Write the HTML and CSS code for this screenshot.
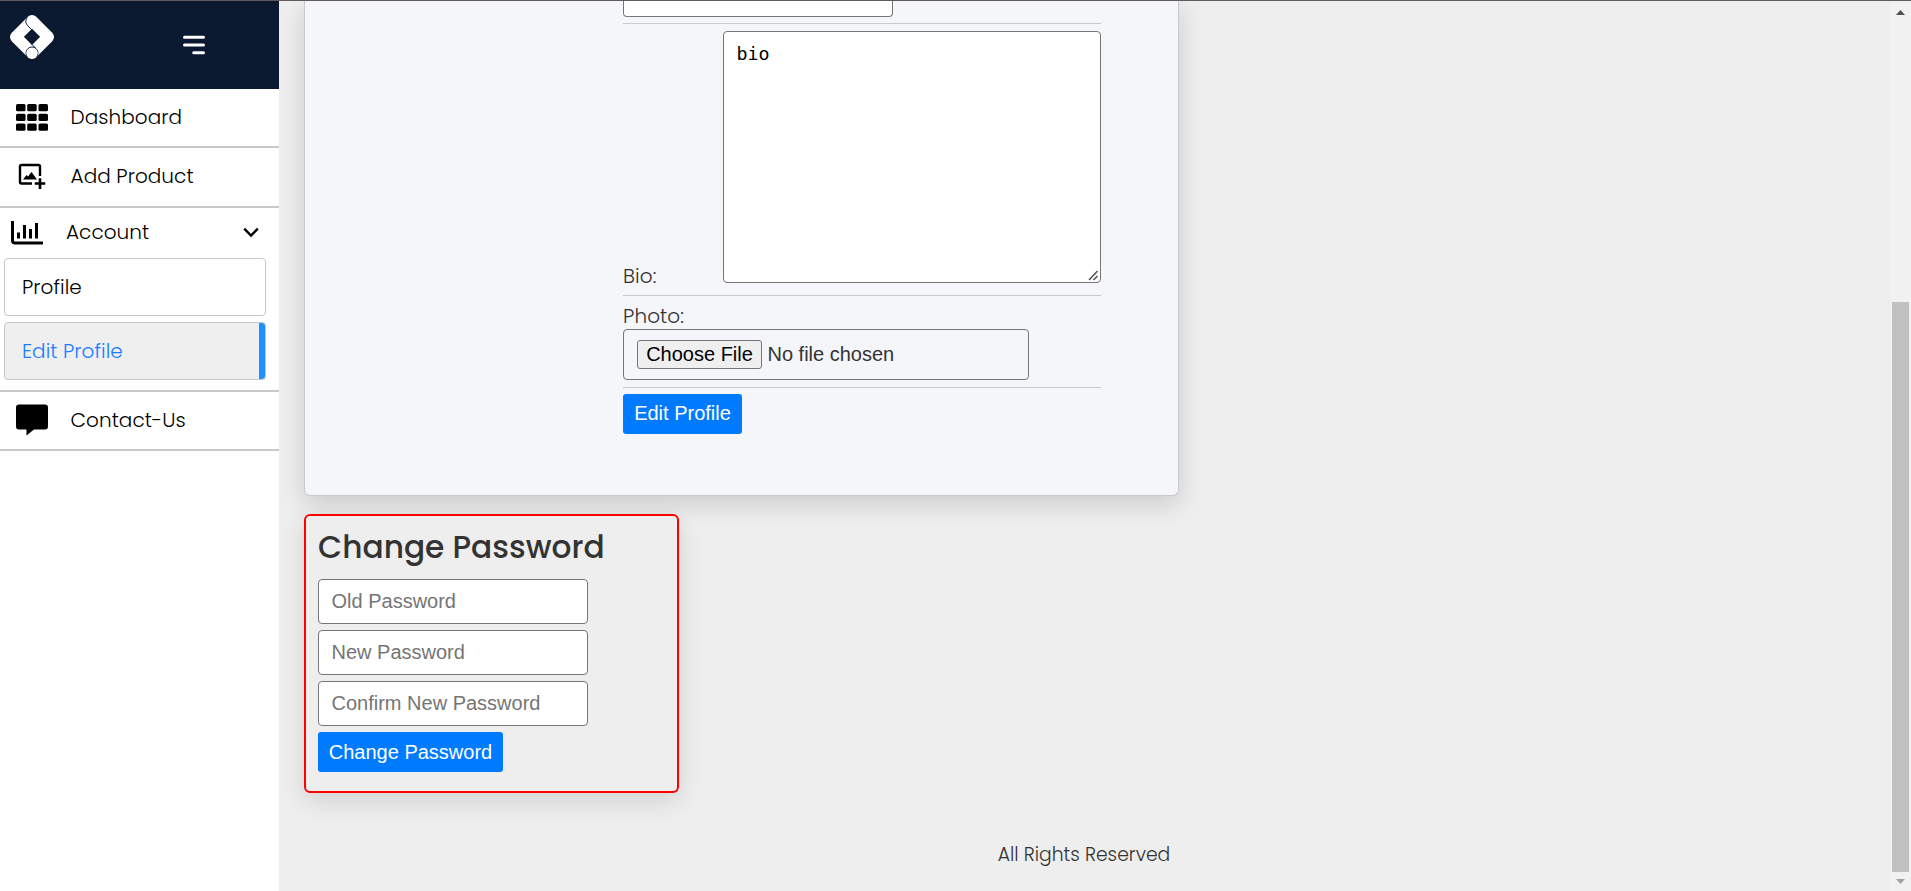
FILE: index.html
```html
<!DOCTYPE html>
<html lang="en">
<head>
<meta charset="utf-8">
<title>Edit Profile</title>
<link rel="stylesheet" href="styles.css">
</head>
<body>
<aside class="sidebar">
  <header class="brand">
    <svg class="logo" width="46" height="46" viewBox="0 0 46 46" fill="none">
      <path d="M23 7L39 23L23 39L7 23Z" stroke="#fff" stroke-width="12" stroke-linejoin="round"/>
      <path d="M15 22.700L23 14.700L31 22.700L23 31Z" fill="#0a192f"/>
      <path d="M18.300 3.500C16 6.500 16.500 9.500 18.800 11.800L22.500 15.500" stroke="#0a192f" stroke-width="1"/>
      <circle cx="23" cy="39" r="6" fill="#fff" stroke="#0a192f" stroke-width="1"/>
      <circle cx="23" cy="39.300" r="5.600" fill="#fff"/>
      <path d="M23 30.500L26.500 34" stroke="#0a192f" stroke-width="1"/>
    </svg>
    <svg class="burger" width="22" height="20" viewBox="0 0 22 20" stroke="#fff" stroke-width="3" stroke-linecap="round"><path d="M1.500 2.300H20.500M1.500 10H20.500M10.700 17.700H20.500"/></svg>
  </header>
  <nav>
    <a class="item dashboard">
      <svg class="icon" width="32" height="28" viewBox="0 0 32 28"><g id="r"><rect y="1" width="9.500" height="7.300" rx="1.500"/><rect x="11.200" y="1" width="9.500" height="7.300" rx="1.500"/><rect x="22.500" y="1" width="9.500" height="7.300" rx="1.500"/></g><use href="#r" y="9.700"/><use href="#r" y="19.400"/></svg>
      <span>Dashboard</span>
    </a>
    <a class="item product">
      <svg class="icon" width="32" height="28" viewBox="0 0 32 28"><path d="M24 14V4.500Q24 3 22.500 3H5.500Q4 3 4 4.500V20Q4 21.500 5.500 21.500H16" fill="none" stroke="#000" stroke-width="2.400"/><path d="M7 17.500L10.500 13L12 14.500L15.500 10L21 17.500ZM22.700 16.300H25.300V20.200H29.300V22.800H25.300V27H22.700V22.800H18.700V20.200H22.700Z"/></svg>
      <span>Add Product</span>
    </a>
    <div class="group">
      <a class="account">
        <svg width="32" height="25" viewBox="0 0 32 25" fill="none" stroke="#000" stroke-width="3"><path d="M1.500 1V20.500Q1.500 23 4 23H32M7.500 12.500V18.500M13.500 5V18.500M19.500 9V18.500M25.500 3V18.500" /></svg>
        <span>Account</span>
        <svg class="chevron" width="16" height="11" viewBox="0 0 16 11" fill="none" stroke="#000" stroke-width="2.400"><path d="M1.200 1.700L8 8.500L14.800 1.700"/></svg>
      </a>
      <a class="sub">Profile</a>
      <a class="sub active">Edit Profile</a>
    </div>
    <a class="item contact">
      <svg class="icon" width="32" height="32" viewBox="0 0 32 32"><path d="M3 .5H29Q32 .5 32 3.500V22.500Q32 25.500 29 25.500H18L10.500 31.500V25.500H3Q0 25.500 0 22.500V3.500Q0 .5 3 .5Z"/></svg>
      <span>Contact-Us</span>
    </a>
  </nav>
</aside>
<main class="content">
  <section class="card">
    <form class="fields">
      <input class="text-input cut">
      <div class="row bio">
        <label>Bio:</label>
        <div class="area">
          <textarea>bio</textarea>
          <svg class="grip" width="11" height="11" viewBox="0 0 11 11" stroke="#505050" stroke-width="1.500"><path d="M1 10L9.500 1M5.500 10L9.500 6"/></svg>
        </div>
      </div>
      <div class="row photo">
        <label>Photo:</label>
        <div class="file"><span class="choose">Choose File</span><span class="none">No file chosen</span></div>
      </div>
      <button class="btn edit" type="button">Edit Profile</button>
    </form>
  </section>
  <section class="password">
    <h2>Change Password</h2>
    <input class="text-input" placeholder="Old Password">
    <input class="text-input" placeholder="New Password">
    <input class="text-input" placeholder="Confirm New Password">
    <button class="btn change" type="button">Change Password</button>
  </section>
  <footer>All Rights Reserved</footer>
</main>
<div class="scrollbar">
  <svg width="9" height="5" viewBox="0 0 9 5"><path d="M0 5L4.500 0L9 5Z" fill="#505050"/></svg>
  <div class="thumb"></div>
  <svg width="9" height="5" viewBox="0 0 9 5"><path d="M0 0H9L4.500 5Z" fill="#a3a3a3"/></svg>
</div>
</body>
</html>
```
FILE: styles.css
```css
* { box-sizing: border-box; }
body {
  margin: 0;
  width: 1911px;
  height: 891px;
  overflow: hidden;
  display: flex;
  border-top: 1px solid #5f5b60;
  background: #eee;
  color: #333;
  font: 300 20px/30px Poppins, Inter, sans-serif;
}
svg { display: block; flex: none; }
.sidebar { width: 279px; height: 890px; background: #fff; color: #000; flex: none; letter-spacing: .05px; }
.brand { height: 88px; background: #0a192f; display: flex; }
.logo { margin: 13px 0 0 9px; }
.burger { margin: 34px 0 0 128px; width: 22px; }
.item { display: flex; align-items: center; border-bottom: 2px solid #c8c8c8; white-space: nowrap; padding-bottom: 2px; }
.icon { margin: 0 22.6px 0 16px; }
.dashboard { height: 59px; }
.product { height: 60px; }
.contact { height: 59px; }
.group { height: 184px; border-bottom: 2px solid #c8c8c8; }
.account { display: flex; align-items: center; height: 50px; padding: 0 0 2px 11px; }
.account span { margin-left: 23px; width: 177px; }
.sub {
  display: flex;
  align-items: center;
  width: 262px;
  height: 58px;
  margin: 0 0 6px 4px;
  padding-left: 17px;
  border: 1px solid #c8c8c8;
  border-radius: 4px;
}
.active { background: linear-gradient(to left, #1e90ff 6px, #efefef 6px); color: #1a7dff; }
.content { width: 1611px; padding-left: 25px; flex: none; display: flex; flex-direction: column; align-items: flex-start; }
.card {
  width: 875px;
  height: 495px;
  border: 1px solid #c8cacd;
  border-top: 0;
  border-radius: 0 0 6px 6px;
  background: #f5f6fa;
  box-shadow: 0 8px 24px rgba(0, 0, 0, .15);
  padding-left: 318px;
}
.fields { width: 478px; display: flex; flex-direction: column; align-items: flex-start; letter-spacing: .1px; }
.text-input {
  display: block;
  width: 270px;
  height: 45px;
  margin: 0 0 6px;
  padding: 0 12.5px;
  border: 1px solid #767676;
  border-radius: 4px;
  background: #fff;
  font: 20px "Liberation Sans", Arial, sans-serif;
}
.text-input::placeholder { color: #757575; }
.cut { height: 16px; margin: 0 0 6px; border-top: 0; border-radius: 0 0 4px 4px; }
.row { width: 478px; border-top: 1px solid #c8cacd; }
.bio { height: 272px; padding-top: 7px; display: flex; justify-content: space-between; }
.bio label { align-self: flex-end; margin-bottom: 4px; }
.area { position: relative; width: 378px; height: 252px; }
.grip { position: absolute; right: 2px; bottom: 2px; }
textarea {
  display: block;
  width: 378px;
  height: 252px;
  padding: 10px 12.5px;
  border: 1px solid #767676;
  border-radius: 4px;
  resize: none;
  color: #000;
  font: 18.3px/23px "DejaVu Sans Mono", monospace;
}
.photo { height: 93px; padding-top: 5px; border-bottom: 1px solid #c8cacd; }
.photo label { display: block; height: 28px; }
.file {
  width: 406px;
  height: 51px;
  padding: 0 0 1px 13px;
  border: 1px solid #767676;
  border-radius: 4px;
  display: flex;
  align-items: center;
  font: 20px/24px "Liberation Sans", Arial, sans-serif;
  letter-spacing: 0;
}
.choose {
  width: 125px;
  height: 29px;
  line-height: 27px;
  text-align: center;
  border: 1px solid #767676;
  border-radius: 3px;
  background: #efefef;
  color: #000;
}
.none { margin-left: 5.5px; }
.btn {
  height: 40px;
  padding: 0 0 2px;
  border: 0;
  border-radius: 3px;
  background: #007bff;
  color: #fff;
  font: 20px "Liberation Sans", Arial, sans-serif;
}
.edit { width: 119px; margin-top: 6px; }
.change { width: 185px; display: block; padding: 0; }
.password {
  width: 375px;
  height: 279px;
  margin-top: 18px;
  padding: 9px 12px;
  border: 2px solid #f00;
  border-radius: 6px;
  background: #eee;
  box-shadow: 0 8px 24px rgba(0, 0, 0, .12);
}
h2 { margin: 0; height: 54px; font-size: 31.25px; line-height: 45px; font-weight: 500; white-space: nowrap; }
footer { width: 1560px; margin-top: 46px; text-align: center; font-size: 18.75px; line-height: 32px; }
.scrollbar {
  width: 21px;
  height: 890px;
  background: #f1f1f1;
  display: flex;
  flex-direction: column;
  align-items: center;
  padding-top: 9px;
}
.thumb { width: 17px; height: 570px; margin: 287px 0 7px; background: #c1c1c1; }
```
